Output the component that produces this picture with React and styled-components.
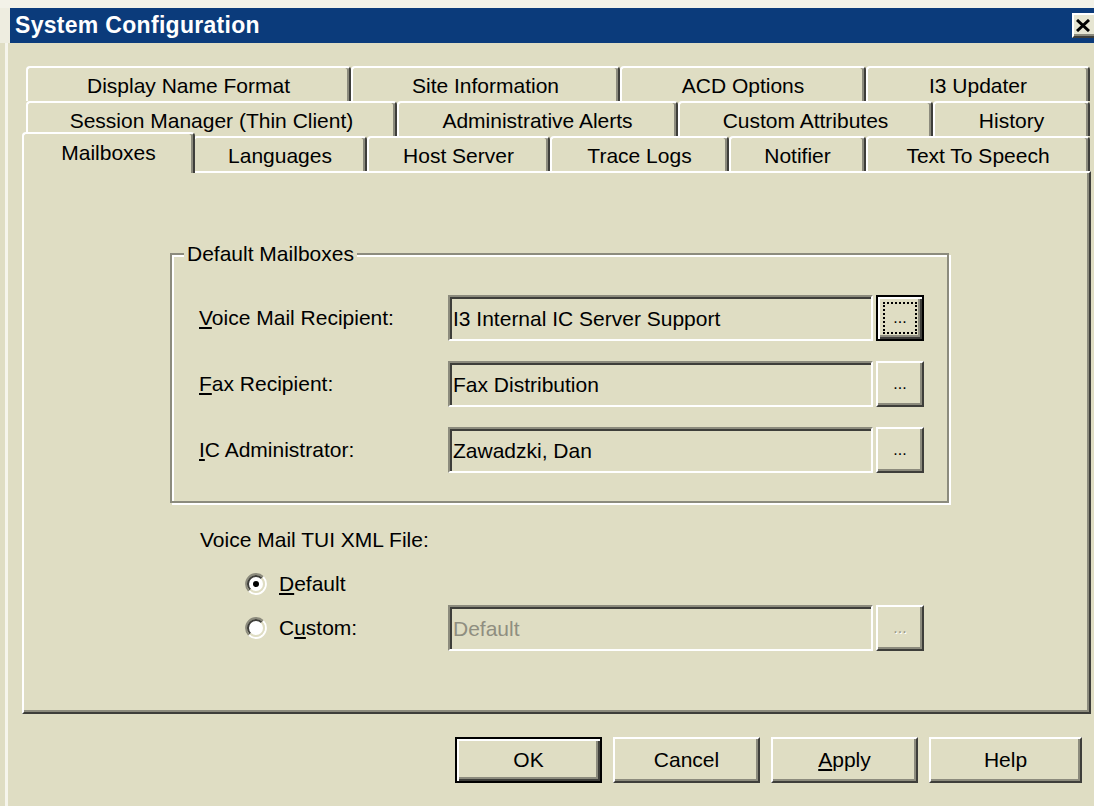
import React from 'react'
import styled, { createGlobalStyle, css } from 'styled-components'

const BG = '#dfddc3'
const LIGHT = '#ffffff'
const SHADOW = '#8c8b7d'
const DARK = '#3e3e3a'
const TITLE = '#0b3b7b'

const GlobalStyle = createGlobalStyle`
    html, body {
        margin: 0;
        padding: 0;
        background: ${BG};
        font-family: "Liberation Sans", Arial, sans-serif;
    }
    #root {
        width: 1094px;
        height: 806px;
    }
`

const tabRows = [
    [
        { label: 'Display Name Format', w: 325 },
        { label: 'Site Information', w: 269 },
        { label: 'ACD Options', w: 246 },
        { label: 'I3 Updater', w: 224 },
    ],
    [
        { label: 'Session Manager (Thin Client)', w: 371 },
        { label: 'Administrative Alerts', w: 281 },
        { label: 'Custom Attributes', w: 255 },
        { label: 'History', w: 157 },
    ],
    [
        { label: 'Mailboxes', w: 167, active: true },
        { label: 'Languages', w: 174 },
        { label: 'Host Server', w: 183 },
        { label: 'Trace Logs', w: 179 },
        { label: 'Notifier', w: 137 },
        { label: 'Text To Speech', w: 224 },
    ],
]

const raised = css`
    border: 2px solid;
    border-color: ${LIGHT} ${DARK} ${DARK} ${LIGHT};
    box-shadow: inset -2px -2px 0 ${SHADOW};
`

const raisedDefault = css`
    border: 2px solid #000;
    box-shadow: inset 2px 2px 0 ${LIGHT}, inset -2px -2px 0 ${DARK}, inset -4px -4px 0 ${SHADOW};
`

const Window = styled.div`
    width: 1094px;
    height: 806px;
    box-sizing: border-box;
    overflow: hidden;
    background: ${BG};
    border-top: 8px solid #f3f2e8;
    display: flex;
    flex-direction: column;
`

const TitleBar = styled.div`
    height: 35px;
    flex-shrink: 0;
    display: flex;
    align-items: center;
    justify-content: space-between;
    background: ${TITLE};
    border-left: 10px solid #eeede0;
    padding-left: 5px;
`

const Title = styled.span`
    color: #fff;
    font-weight: bold;
    font-size: 23px;
    letter-spacing: 0.3px;
`

const CloseButton = styled.button`
    width: 28px;
    height: 25px;
    margin-right: -6px;
    padding: 0 0 0 2px;
    box-sizing: border-box;
    background: #e6e5d2;
    display: flex;
    align-items: center;
    justify-content: flex-start;
    ${raised}
`

const Body = styled.div`
    flex: 1;
    margin-left: 5px;
    border-left: 3px solid #f6f5ec;
    padding: 23px 3px 0 14px;
    display: flex;
    flex-direction: column;
`

const TabRow = styled.div`
    display: flex;
    height: 35px;
    padding-left: 4px;
`

const Tab = styled.div`
    box-sizing: border-box;
    width: ${p => p.$w}px;
    height: 35px;
    flex-shrink: 0;
    display: flex;
    align-items: center;
    justify-content: center;
    padding-top: 2px;
    background: ${BG};
    border-top: 2px solid ${LIGHT};
    border-left: 2px solid ${LIGHT};
    border-right: 2px solid ${DARK};
    box-shadow: inset -2px 0 0 ${SHADOW};
    border-radius: 4px 4px 0 0;
    font-size: 21px;
    color: #000;
    white-space: nowrap;
    ${p => p.$active && css`
        position: relative;
        z-index: 1;
        width: ${p.$w + 6}px;
        height: 41px;
        margin: -4px -2px -2px -4px;
        padding-bottom: 4px;
    `}
`

const Panel = styled.div`
    box-sizing: border-box;
    height: 543px;
    border: 2px solid;
    border-color: ${LIGHT} ${DARK} ${DARK} ${LIGHT};
    box-shadow: inset -2px -2px 0 ${SHADOW};
    padding: 80px 0 0 146px;
`

const GroupBox = styled.div`
    position: relative;
    box-sizing: border-box;
    width: 779px;
    border: 2px solid ${SHADOW};
    box-shadow: 2px 2px 0 ${LIGHT}, inset 2px 2px 0 ${LIGHT};
    padding: 40px 0 28px 27px;
`

const Caption = styled.span`
    position: absolute;
    top: -13px;
    left: 12px;
    padding: 0 3px;
    background: ${BG};
    font-size: 21px;
    line-height: 24px;
`

const FieldGrid = styled.div`
    display: grid;
    grid-template-columns: 246px 425px 48px;
    column-gap: 3px;
    row-gap: 20px;
    align-items: center;
`

const Label = styled.span`
    font-size: 21px;
    white-space: nowrap;
`

const Key = styled.span`
    text-decoration: underline;
    text-underline-offset: 2px;
`

const TextField = styled.div`
    box-sizing: border-box;
    height: 46px;
    border: 2px solid;
    border-color: ${SHADOW} ${LIGHT} ${LIGHT} ${SHADOW};
    box-shadow: inset 2px 2px 0 ${DARK};
    padding: 2px 0 0 3px;
    display: flex;
    align-items: center;
    font-size: 21px;
    color: ${p => (p.$disabled ? '#8f8e80' : '#000')};
    white-space: nowrap;
    overflow: hidden;
`

const PushButton = styled.button`
    box-sizing: border-box;
    width: ${p => p.$w || 147}px;
    height: 46px;
    padding: 0;
    background: ${BG};
    font-family: "Liberation Sans", Arial, sans-serif;
    font-size: 21px;
    color: #000;
    display: flex;
    align-items: center;
    justify-content: center;
    ${p => (p.$default ? raisedDefault : raised)}
    &:disabled {
        color: #9a998a;
        text-shadow: 1px 1px 0 ${LIGHT};
    }
`

const BrowseButton = styled(PushButton)`
    width: 48px;
    font-size: 16px;
    padding: ${p => (p.$default ? '5px' : '0')};
`

const FocusRing = styled.span`
    flex: 1;
    align-self: stretch;
    border: 2px dotted #000;
    display: flex;
    align-items: center;
    justify-content: center;
`

const XmlBlock = styled.div`
    margin: 25px 0 0 30px;
`

const XmlLabel = styled.div`
    font-size: 21px;
    line-height: 24px;
`

const ChoiceGrid = styled.div`
    display: grid;
    grid-template-columns: 200px 425px 48px;
    grid-template-rows: 36px 46px;
    column-gap: 3px;
    row-gap: 3px;
    align-items: center;
    margin: 14px 0 0 45px;
`

const RadioOption = styled.label`
    display: flex;
    align-items: center;
    gap: 12px;
    font-size: 21px;
    grid-column: ${p => (p.$full ? '1 / -1' : 'auto')};
`

const ButtonBar = styled.div`
    display: flex;
    justify-content: flex-end;
    gap: 11px;
    margin-top: 23px;
    padding-right: 9px;
`

// classic sunken radio button
const Radio = ({ checked }) => (
    <svg width="22" height="22" viewBox="0 0 22 22">
        <circle cx="11" cy="11" r="8" fill="#fff" />
        <path d="M3.93 18.07 A10 10 0 0 1 18.07 3.93" fill="none" stroke={SHADOW} strokeWidth="2" />
        <path d="M18.07 3.93 A10 10 0 0 1 3.93 18.07" fill="none" stroke={LIGHT} strokeWidth="2" />
        <path d="M5.34 16.66 A8 8 0 0 1 16.66 5.34" fill="none" stroke={DARK} strokeWidth="2" />
        <path d="M16.66 5.34 A8 8 0 0 1 5.34 16.66" fill="none" stroke={BG} strokeWidth="2" />
        {checked && <circle cx="11" cy="11" r="3" fill="#000" />}
    </svg>
)

const CloseGlyph = () => (
    <svg width="14" height="13" viewBox="0 0 14 13">
        <path d="M1 1 L13 12 M13 1 L1 12" stroke="#000" strokeWidth="3" />
    </svg>
)

const App = () => (
    <Window>
        <GlobalStyle />
        <TitleBar>
            <Title>System Configuration</Title>
            <CloseButton><CloseGlyph /></CloseButton>
        </TitleBar>
        <Body>
            {tabRows.map((row, i) => (
                <TabRow key={i}>
                    {row.map(tab => (
                        <Tab key={tab.label} $w={tab.w} $active={tab.active}>{tab.label}</Tab>
                    ))}
                </TabRow>
            ))}
            <Panel>
                <GroupBox>
                    <Caption>Default Mailboxes</Caption>
                    <FieldGrid>
                        <Label><Key>V</Key>oice Mail Recipient:</Label>
                        <TextField>I3 Internal IC Server Support</TextField>
                        <BrowseButton $default><FocusRing>...</FocusRing></BrowseButton>

                        <Label><Key>F</Key>ax Recipient:</Label>
                        <TextField>Fax Distribution</TextField>
                        <BrowseButton>...</BrowseButton>

                        <Label><Key>I</Key>C Administrator:</Label>
                        <TextField>Zawadzki, Dan</TextField>
                        <BrowseButton>...</BrowseButton>
                    </FieldGrid>
                </GroupBox>
                <XmlBlock>
                    <XmlLabel>Voice Mail TUI XML File:</XmlLabel>
                    <ChoiceGrid>
                        <RadioOption $full>
                            <Radio checked />
                            <span><Key>D</Key>efault</span>
                        </RadioOption>
                        <RadioOption>
                            <Radio />
                            <span>C<Key>u</Key>stom:</span>
                        </RadioOption>
                        <TextField $disabled>Default</TextField>
                        <BrowseButton disabled>...</BrowseButton>
                    </ChoiceGrid>
                </XmlBlock>
            </Panel>
            <ButtonBar>
                <PushButton $default>OK</PushButton>
                <PushButton>Cancel</PushButton>
                <PushButton><span><Key>A</Key>pply</span></PushButton>
                <PushButton $w={153}>Help</PushButton>
            </ButtonBar>
        </Body>
    </Window>
)

export default App
